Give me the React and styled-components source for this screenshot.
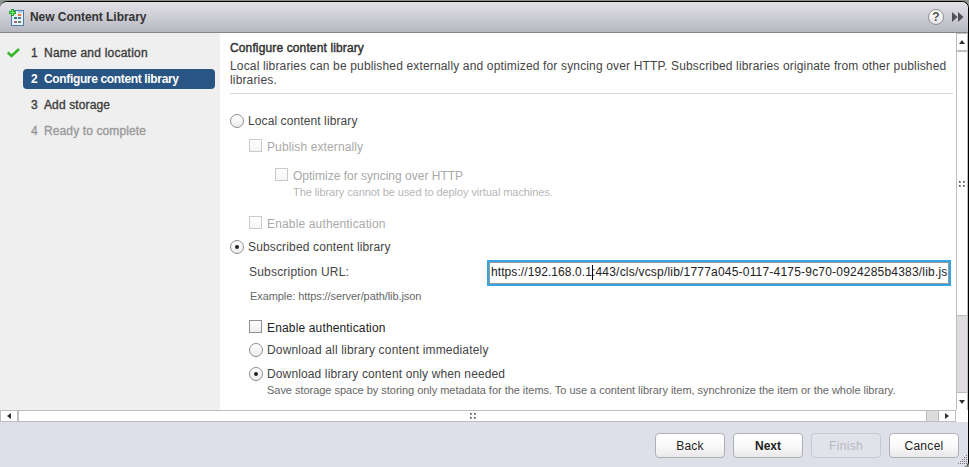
import React from "react";
import styled, { createGlobalStyle } from "styled-components";

const Global = createGlobalStyle`
  * { box-sizing: border-box; }
  html, body { margin: 0; padding: 0; overflow: hidden; }
  body { font-family: "Liberation Sans", Arial, sans-serif; font-size: 12px; color: #444; }
`;

const Backdrop = styled.div`
  width: 969px;
  height: 467px;
  padding-top: 1px;
  background: #8e958f;
`;
const Dialog = styled.div`
  display: flex;
  flex-direction: column;
  width: 969px;
  height: 466px;
  overflow: hidden;
  border-top: 1px solid #000;
  border-right: 1px solid #000;
  border-radius: 7px 7px 5px 0;
  background: #dedfe8;
`;
const Header = styled.header`
  display: flex;
  align-items: center;
  flex: none;
  height: 31px;
  padding: 0 4px 0 9px;
  background: linear-gradient(#e2e2e7, #cfcfd6 45%, #b6b6bf);
  border-bottom: 1px solid #85858a;
`;
const Title = styled.h1`
  flex: 1;
  margin: 0 0 0 6px;
  font-size: 12px;
  line-height: 16px;
  color: #333;
  letter-spacing: ${(p) => p.$ls}px;
`;
const Icon = styled.svg`
  display: block;
  flex: none;
`;
const Tools = styled.div`
  display: flex;
  align-items: center;
  gap: 8px;
  padding-bottom: 1px;
`;
const Help = styled.div`
  width: 16px;
  height: 16px;
  border: 1px solid #909094;
  border-radius: 50%;
  background: linear-gradient(#fff, #e6e6ea);
  text-align: center;
  font-size: 12px;
  font-weight: bold;
  line-height: 14px;
  color: #555;
`;
const Body = styled.div`
  display: flex;
  flex: none;
  height: 377px;
`;
const Nav = styled.nav`
  flex: none;
  width: 220px;
  padding-top: 10px;
  background: #efefef;
`;
const Step = styled.div`
  display: flex;
  align-items: center;
  height: 20px;
  margin-bottom: 6px;
  padding-left: 7px;
`;
const StepMark = styled.div`
  flex: none;
  width: 16px;
`;
const StepLabel = styled.div`
  display: flex;
  width: 192px;
  height: 20px;
  padding-left: 8px;
  border-radius: 4px;
  line-height: 20px;
  font-weight: ${(p) => (p.$state === "active" ? "bold" : "normal")};
  -webkit-text-stroke: ${(p) => (p.$state === "active" ? "0" : "0.35px")};
  color: ${(p) => ({ active: "#fff", later: "#999" })[p.$state] || "#3c3c3c"};
  background: ${(p) => (p.$state === "active" ? "#285583" : "transparent")};
  letter-spacing: ${(p) => p.$ls}px;
  white-space: pre;
`;
const StepNumber = styled.span`
  width: 13px;
`;
const Content = styled.main`
  flex: 1;
  min-width: 0;
  padding: 7px 3px 0 10px;
  background: #fff;
`;
const Heading = styled.h2`
  margin: 0;
  font-size: 12px;
  font-weight: normal;
  -webkit-text-stroke: 0.45px;
  line-height: 16px;
  color: #333;
  letter-spacing: ${(p) => p.$ls}px;
`;
const Description = styled.p`
  margin: 3px 0 0;
  padding-bottom: 6px;
  line-height: 14px;
  border-bottom: 1px solid #d6d6d6;
  color: #444;
  white-space: pre;
  letter-spacing: ${(p) => p.$ls}px;
`;
const Row = styled.div`
  display: flex;
  align-items: center;
  height: ${(p) => p.$h || 16}px;
  margin-top: ${(p) => p.$mt || 0}px;
  padding-left: ${(p) => p.$indent || 0}px;
  color: ${(p) => p.$color || "#444"};
  font-size: ${(p) => p.$size || 12}px;
  letter-spacing: ${(p) => p.$ls || 0}px;
  white-space: pre;
`;
const CheckRow = styled(Row)`
  padding-top: 2px;
`;
const Radio = styled.span`
  display: flex;
  align-items: center;
  justify-content: center;
  flex: none;
  width: 14px;
  height: 14px;
  margin-right: 4px;
  border: 1px solid #8e8e8e;
  border-radius: 50%;
  background: linear-gradient(#fff, #ececec);
  &::after {
    content: "";
    width: 4px;
    height: 4px;
    border-radius: 50%;
    background: ${(p) => (p.$on ? "#222" : "transparent")};
  }
`;
const Check = styled.span`
  flex: none;
  width: 13px;
  height: 13px;
  margin: 0 5px 3px 0;
  border: 1px solid ${(p) => (p.$disabled ? "#cbcbcb" : "#8f8f8f")};
  background: linear-gradient(#fff, ${(p) => (p.$disabled ? "#f7f4f7" : "#ececec")});
`;
const UrlLabel = styled.span`
  width: 238px;
  padding-bottom: 2px;
`;
const UrlField = styled.div`
  display: flex;
  align-items: center;
  width: 464px;
  height: 26px;
  border: 2px solid #36a6e2;
  background: #fff;
`;
const UrlInner = styled.div`
  display: flex;
  align-items: center;
  width: 100%;
  height: 22px;
  padding: 0 0 2px 1px;
  overflow: hidden;
  border: 1px solid #999;
  color: #222;
`;
const UrlPart = styled.span`
  letter-spacing: ${(p) => p.$ls}px;
`;
const Caret = styled.span`
  flex: none;
  width: 1px;
  height: 15px;
  margin-right: -1px;
  background: #000;
`;
const VScroll = styled.div`
  display: flex;
  flex-direction: column;
  flex: none;
  width: 12px;
  border: 1px solid #bdbdbd;
  border-bottom: 0;
  background: #dfdce0;
`;
const HScroll = styled.div`
  display: flex;
  flex: none;
  width: 956px;
  height: 12px;
  border: 1px solid #bdbdbd;
  background: #dcdcdc;
`;
const ScrollBand = styled.div`
  flex: none;
  height: 12px;
  background: #fff;
`;
const Cell = styled.div`
  display: flex;
  align-items: center;
  justify-content: center;
  flex: none;
  width: ${(p) => p.$w || 10}px;
  height: ${(p) => p.$h || 10}px;
  background: #fff;
`;
const Gap = styled.div`
  flex: none;
  width: ${(p) => p.$w || 10}px;
  height: ${(p) => p.$h || 10}px;
  background: ${(p) => (p.$line ? "#bdbdbd" : "transparent")};
`;
const Footer = styled.footer`
  display: flex;
  align-items: flex-start;
  flex: 1;
  padding: 11px 0 0 655px;
`;
const Button = styled.button`
  width: 70px;
  height: 25px;
  margin: 0 8px 0 0;
  padding: 1px 0 0;
  border: 1px solid ${(p) => (p.disabled ? "#c6c9d0" : "#adb1b6")};
  border-radius: 4px;
  background: ${(p) => (p.disabled ? "#e2e3ea" : "linear-gradient(#fff, #fafafa 50%, #ebe8eb)")};
  font: ${(p) => (p.$strong ? "bold" : "normal")} 12px "Liberation Sans", Arial, sans-serif;
  color: ${(p) => (p.disabled ? "#b3b8c1" : "#222")};
  letter-spacing: ${(p) => p.$ls || 0}px;
`;
const Grip = styled.svg`
  display: block;
  flex: none;
  align-self: flex-end;
  margin: 0 0 2px -9px;
`;

const LibraryIcon = () => (
  <Icon width="15" height="17" viewBox="0 0 15 17" shapeRendering="crispEdges">
    <path d="M4 1H14V16H2V6Z" fill="#e9f2fb" stroke="#4c7aae" />
    <path d="M9 2h4v2H9z" fill="#b4cce5" />
    <path d="M9 5h3v2H9z" fill="#f07535" />
    <path d="M5 8h3v2H5z" fill="#267a78" />
    <path d="M9 8h3v2H9z" fill="#59748d" />
    <path d="M5 12h3v2H5z" fill="#a1627e" />
    <path d="M9 12h3v2H9z" fill="#5d8d5d" />
    <path d="M2 0h3v2h2v3H5v2H2V5H0V2h2z" fill="#25a832" />
    <path d="M3 1h1v2h2v1H4v2H3V4H1V3h2z" fill="#72ed65" />
  </Icon>
);
const Tick = () => (
  <Icon width="13" height="10" viewBox="0 0 13 10">
    <path d="M0.8 4.5L4.5 8L12 1" fill="none" stroke="#35b52a" strokeWidth="2.5" />
  </Icon>
);
const Dots = () => (
  <Icon width="6" height="6" viewBox="0 0 6 6" shapeRendering="crispEdges">
    <path d="M0 0h2v2H0zM4 0h2v2H4zM0 4h2v2H0zM4 4h2v2H4z" fill="#999" />
    <path d="M0 0h1v1H0zM4 0h1v1H4zM0 4h1v1H0zM4 4h1v1H4z" fill="#444" />
  </Icon>
);
const Arrow = ({ d, w = 6, h = 4 }) => (
  <Icon width={w} height={h} viewBox={`0 0 ${w} ${h}`}>
    <path d={d} fill="#333" />
  </Icon>
);

const steps = [
  { label: "Name and location", state: "done", ls: 0.22 },
  { label: "Configure content library", state: "active", ls: -0.35 },
  { label: "Add storage", state: "next", ls: 0.12 },
  { label: "Ready to complete", state: "later", ls: 0.12 },
];

export default function App() {
  return (
    <Backdrop>
      <Global />
      <Dialog>
        <Header>
          <LibraryIcon />
          <Title $ls={-0.05}>New Content Library</Title>
          <Tools>
            <Help>?</Help>
            <Icon width="12" height="10" viewBox="0 0 12 10">
              <path d="M0 0L5.5 5L0 10ZM6 0L11.5 5L6 10Z" fill="#505054" />
            </Icon>
          </Tools>
        </Header>
        <Body>
          <Nav>
            {steps.map((s, i) => (
              <Step key={s.label}>
                <StepMark>{s.state === "done" && <Tick />}</StepMark>
                <StepLabel $state={s.state} $ls={s.ls}>
                  <StepNumber>{i + 1}</StepNumber>
                  {s.label}
                </StepLabel>
              </Step>
            ))}
          </Nav>
          <Content>
            <Heading $ls={0.13}>Configure content library</Heading>
            <Description $ls={0.153}>
              {"Local libraries can be published externally and optimized for syncing over HTTP. Subscribed libraries originate from other published\nlibraries."}
            </Description>
            <Row $mt={19} $ls={0.1}><Radio />Local content library</Row>
            <CheckRow $mt={9} $indent={19} $color="#a9a9a9" $ls={0.12}><Check $disabled />Publish externally</CheckRow>
            <CheckRow $mt={13} $indent={45} $color="#a9a9a9" $ls={0}><Check $disabled />Optimize for syncing over HTTP</CheckRow>
            <Row $mt={1} $indent={63} $color="#b6b6b6" $size={11} $ls={-0.07}>The library cannot be used to deploy virtual machines.</Row>
            <CheckRow $mt={15} $indent={19} $color="#a9a9a9" $ls={0.15}><Check $disabled />Enable authentication</CheckRow>
            <Row $mt={8} $ls={0.15}><Radio $on />Subscribed content library</Row>
            <Row $mt={5} $h={26} $indent={19} $ls={0.2}>
              <UrlLabel>Subscription URL:</UrlLabel>
              <UrlField>
                <UrlInner>
                  <UrlPart $ls={0.08}>https://192.168.0.1</UrlPart>
                  <Caret />
                  <UrlPart $ls={0.2}>:443/cls/vcsp/lib/1777a045-0117-4175-9c70-0924285b4383/lib.js</UrlPart>
                </UrlInner>
              </UrlField>
            </Row>
            <Row $mt={2} $indent={20} $color="#666" $size={11} $ls={-0.08}>Example: https://server/path/lib.json</Row>
            <CheckRow $mt={15} $indent={19} $color="#222" $ls={0.15}><Check />Enable authentication</CheckRow>
            <Row $mt={7} $indent={19} $ls={0.17}><Radio />Download all library content immediately</Row>
            <Row $mt={8} $indent={19} $ls={0.13}><Radio $on />Download library content only when needed</Row>
            <Row $indent={37} $color="#666" $size={11} $ls={-0.03}>Save storage space by storing only metadata for the items. To use a content library item, synchronize the item or the whole library.</Row>
          </Content>
          <VScroll>
            <Cell $h={16}><Arrow d="M0 4L3 0L6 4Z" /></Cell>
            <Gap $h={2} $line />
            <Cell $h={263}><Dots /></Cell>
            <Gap $h={1} $line />
            <Gap $h={76} />
            <Gap $h={1} $line />
            <Cell $h={17}><Arrow d="M0 0L3 4L6 0Z" /></Cell>
          </VScroll>
        </Body>
        <ScrollBand>
          <HScroll>
            <Cell $w={16}><Arrow w={4} h={6} d="M4 0L0 3L4 6Z" /></Cell>
            <Gap $w={2} $line />
            <Cell $w={907}><Dots /></Cell>
            <Gap $w={1} $line />
            <Gap $w={11} />
            <Gap $w={1} $line />
            <Cell $w={16}><Arrow w={4} h={6} d="M0 0L4 3L0 6Z" /></Cell>
          </HScroll>
        </ScrollBand>
        <Footer>
          <Button $ls={0.2}>Back</Button>
          <Button $strong>Next</Button>
          <Button disabled $ls={0.3}>Finish</Button>
          <Button $ls={0.3}>Cancel</Button>
          <Grip width="10" height="10" viewBox="0 0 10 10" shapeRendering="crispEdges">
            <path d="M8 0h1v1H8zM6 2h1v1H6zM8 2h1v1H8zM4 4h1v1H4zM6 4h1v1H6zM8 4h1v1H8zM2 6h1v1H2zM4 6h1v1H4zM6 6h1v1H6zM8 6h1v1H8zM0 8h1v1H0zM2 8h1v1H2zM4 8h1v1H4zM6 8h1v1H6zM8 8h1v1H8z" fill="#777" />
          </Grip>
        </Footer>
      </Dialog>
    </Backdrop>
  );
}
